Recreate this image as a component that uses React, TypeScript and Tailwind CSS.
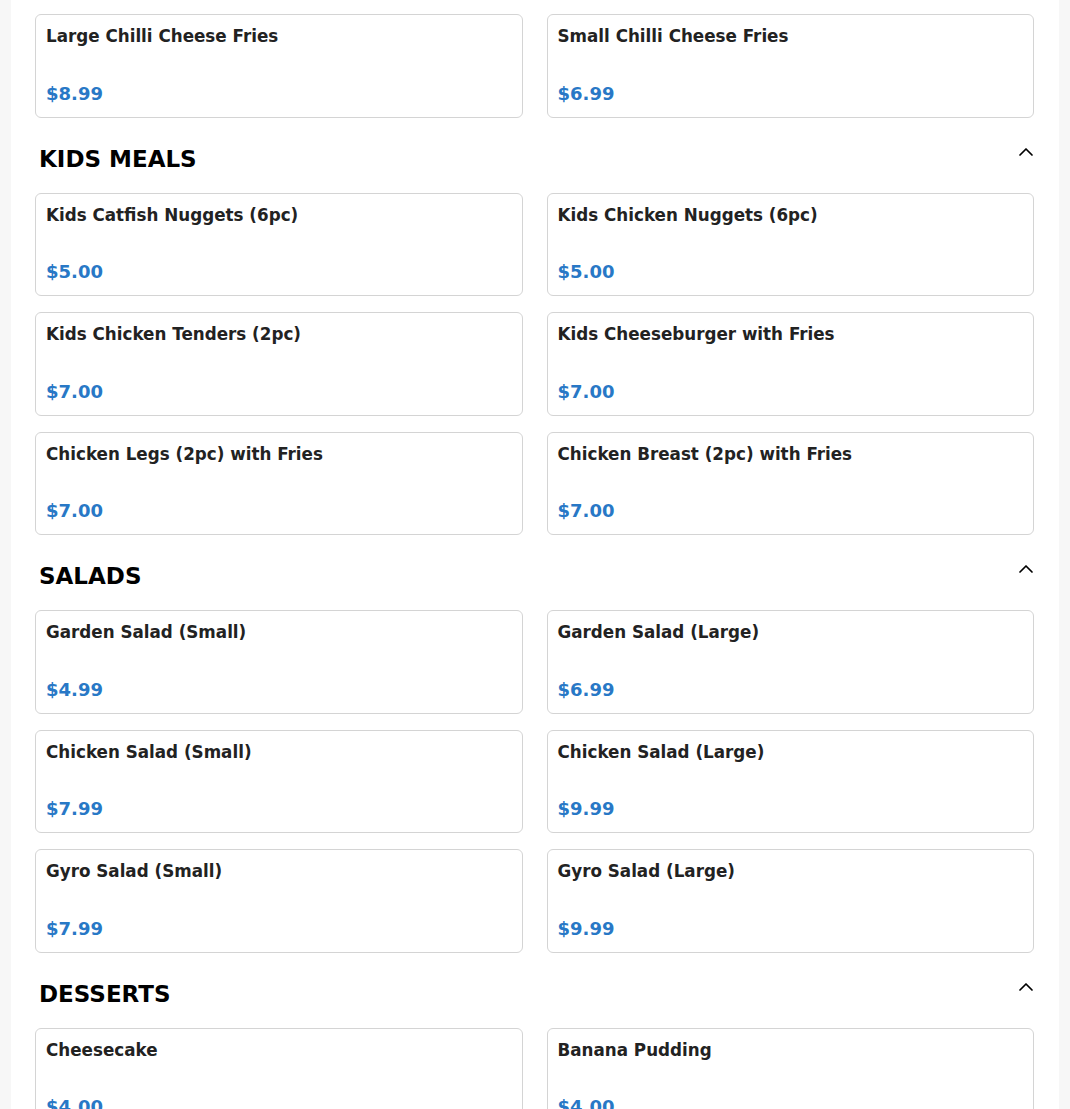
import React from 'react';
import { ChevronUp } from 'lucide-react';

type Item = { name: string; price: string };
type Section = { title?: string; items: Item[] };

const sections: Section[] = [
  {
    items: [
      { name: 'Large Chilli Cheese Fries', price: '$8.99' },
      { name: 'Small Chilli Cheese Fries', price: '$6.99' },
    ],
  },
  {
    title: 'KIDS MEALS',
    items: [
      { name: 'Kids Catfish Nuggets (6pc)', price: '$5.00' },
      { name: 'Kids Chicken Nuggets (6pc)', price: '$5.00' },
      { name: 'Kids Chicken Tenders (2pc)', price: '$7.00' },
      { name: 'Kids Cheeseburger with Fries', price: '$7.00' },
      { name: 'Chicken Legs (2pc) with Fries', price: '$7.00' },
      { name: 'Chicken Breast (2pc) with Fries', price: '$7.00' },
    ],
  },
  {
    title: 'SALADS',
    items: [
      { name: 'Garden Salad (Small)', price: '$4.99' },
      { name: 'Garden Salad (Large)', price: '$6.99' },
      { name: 'Chicken Salad (Small)', price: '$7.99' },
      { name: 'Chicken Salad (Large)', price: '$9.99' },
      { name: 'Gyro Salad (Small)', price: '$7.99' },
      { name: 'Gyro Salad (Large)', price: '$9.99' },
    ],
  },
  {
    title: 'DESSERTS',
    items: [
      { name: 'Cheesecake', price: '$4.00' },
      { name: 'Banana Pudding', price: '$4.00' },
    ],
  },
];

function MenuCard({ item }: { item: Item }) {
  return (
    <div className="h-[103.5px] rounded-md border border-[#d4d4d4] bg-white px-[10px] pt-[9px] pb-[9px] flex flex-col justify-between">
      <div className="text-[16.75px] leading-[24px] font-bold text-[#222]">{item.name}</div>
      <div className="text-[18px] leading-[28px] font-bold text-[#2878c6]">{item.price}</div>
    </div>
  );
}

export default function App() {
  return (
    <div
      className="min-h-screen bg-[#f7f7f7]"
      style={{ fontFamily: '"DejaVu Sans", Verdana, sans-serif' }}
    >
      <div className="mx-[11px] bg-white pl-6 pr-[25px] pt-[14px] pb-10">
        {sections.map((section, i) => (
          <div key={i}>
            {/* section header */}
            {section.title && (
              <div className="flex items-start justify-between pl-1 pt-[24px] pb-[17px]">
                <h2 className="text-[23px] leading-[34px] font-bold text-black">
                  {section.title}
                </h2>
                <ChevronUp size={24} strokeWidth={1.75} className="text-black mt-[-2px] mr-[-4px]" />
              </div>
            )}
            <div className="grid grid-cols-2 gap-x-6 gap-y-4">
              {section.items.map(item => (
                <MenuCard key={item.name} item={item} />
              ))}
            </div>
          </div>
        ))}
      </div>
    </div>
  );
}
